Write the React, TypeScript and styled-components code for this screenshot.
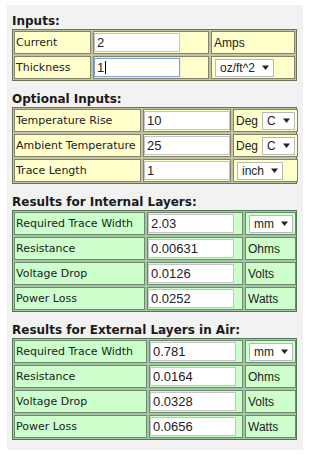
import styled, { createGlobalStyle } from 'styled-components';

type Tone = 'yellow' | 'green';

type Row = {
    label: string,
    value: string,
    unit?: string,
    select?: string,
    focused?: boolean,
}

const tones = {
    yellow: { cell: '#ffffcc', gap: '#c2c2a6', line: '#84846b', edge: '#707058' },
    green: { cell: '#ccffcc', gap: '#a8c4a8', line: '#6b8b6b', edge: '#567456' },
};

const GlobalStyle = createGlobalStyle`
    body {
        margin: 0;
        background: #ffffff;
        font-family: "DejaVu Sans", Verdana, sans-serif;
    }
`;

const sections: { title: string, tone: Tone, cols: string, rows: Row[] }[] = [
    {
        title: 'Inputs:',
        tone: 'yellow',
        cols: '77px 116px 1fr',
        rows: [
            { label: 'Current', value: '2', unit: 'Amps' },
            { label: 'Thickness', value: '1', select: 'oz/ft^2', focused: true },
        ],
    },
    {
        title: 'Optional Inputs:',
        tone: 'yellow',
        cols: '127px 88px 1fr',
        rows: [
            { label: 'Temperature Rise', value: '10', unit: 'Deg', select: 'C' },
            { label: 'Ambient Temperature', value: '25', unit: 'Deg', select: 'C' },
            { label: 'Trace Length', value: '1', select: 'inch' },
        ],
    },
    {
        title: 'Results for Internal Layers:',
        tone: 'green',
        cols: '131px 96px 1fr',
        rows: [
            { label: 'Required Trace Width', value: '2.03', select: 'mm' },
            { label: 'Resistance', value: '0.00631', unit: 'Ohms' },
            { label: 'Voltage Drop', value: '0.0126', unit: 'Volts' },
            { label: 'Power Loss', value: '0.0252', unit: 'Watts' },
        ],
    },
    {
        title: 'Results for External Layers in Air:',
        tone: 'green',
        cols: '133px 94px 1fr',
        rows: [
            { label: 'Required Trace Width', value: '0.781', select: 'mm' },
            { label: 'Resistance', value: '0.0164', unit: 'Ohms' },
            { label: 'Voltage Drop', value: '0.0328', unit: 'Volts' },
            { label: 'Power Loss', value: '0.0656', unit: 'Watts' },
        ],
    },
];

const DownArrow = () => (
    <svg width="7" height="5" viewBox="0 0 7 5">
        <path d="M0 0.5 H7 L3.5 5 Z" fill="#222" />
    </svg>
);

export default function App() {
    return (
        <>
            <GlobalStyle />
            <Panel>
                {sections.map((s) => (
                    <Section key={s.title}>
                        <Title>{s.title}</Title>
                        <Grid $tone={s.tone} $cols={s.cols}>
                            {s.rows.map((r) => (
                                <GridRow key={r.label}>
                                    <Cell $tone={s.tone}>{r.label}</Cell>
                                    <InputCell $tone={s.tone}>
                                        <Field $focused={r.focused}>
                                            {r.value}
                                            {r.focused && <Caret />}
                                        </Field>
                                    </InputCell>
                                    <UnitCell $tone={s.tone}>
                                        {r.unit && <Unit>{r.unit}</Unit>}
                                        {r.select && (
                                            <Select>
                                                {r.select}
                                                <DownArrow />
                                            </Select>
                                        )}
                                    </UnitCell>
                                </GridRow>
                            ))}
                        </Grid>
                    </Section>
                ))}
            </Panel>
        </>
    );
}

const Panel = styled.div`
    width: 285px;
    margin: 5px 0 0 7px;
    padding: 9px 6px 10px 5px;
    background: #f2f2f2;
    display: flex;
    flex-direction: column;
    gap: 11px;
`;

const Section = styled.div`
    display: flex;
    flex-direction: column;
    gap: 1px;
`;

const Title = styled.div`
    font-family: "DejaVu Sans", Verdana, sans-serif;
    font-weight: bold;
    font-size: 12px;
    line-height: 14px;
    color: #1a1a1a;
`;

const Grid = styled.div<{ $tone: Tone, $cols: string }>`
    display: grid;
    grid-template-columns: ${(p) => p.$cols};
    gap: 2px;
    padding: 1px;
    background: ${(p) => tones[p.$tone].gap};
    border: 1px solid ${(p) => tones[p.$tone].edge};
`;

const GridRow = styled.div`
    display: contents;
`;

const Cell = styled.div<{ $tone: Tone }>`
    box-sizing: border-box;
    height: 23px;
    background: ${(p) => tones[p.$tone].cell};
    border: 1px solid ${(p) => tones[p.$tone].line};
    display: flex;
    align-items: center;
    padding: 0 1px;
    font-family: "DejaVu Sans", Verdana, sans-serif;
    font-size: 11px;
    color: #222;
    white-space: nowrap;
`;

const InputCell = styled(Cell)`
    padding: 0;
`;

const UnitCell = styled(Cell)`
    gap: 3px;
    padding: 0 2px;
    font-family: "Liberation Sans", Arial, sans-serif;
    font-size: 12px;
`;

const Unit = styled.span`
    color: #222;
`;

const Field = styled.div<{ $focused?: boolean }>`
    box-sizing: border-box;
    width: 86px;
    height: 19px;
    background: #fff;
    border: 1px solid ${(p) => (p.$focused ? '#7ea3d6' : '#c4c4c4')};
    box-shadow: ${(p) => (p.$focused ? '0 0 1px #7ea3d6' : 'none')};
    display: flex;
    align-items: center;
    padding: 0 2px;
    font-family: "Liberation Sans", Arial, sans-serif;
    font-size: 13px;
    color: #222;
`;

const Caret = styled.span`
    display: inline-block;
    width: 1px;
    height: 13px;
    margin-left: 1px;
    background: #000;
`;

const Select = styled.div`
    box-sizing: border-box;
    height: 18px;
    margin-left: 1px;
    background: #fff;
    border: 1px solid #b8b8b8;
    display: flex;
    align-items: center;
    gap: 7px;
    padding: 0 4px;
    font-family: "Liberation Sans", Arial, sans-serif;
    font-size: 12px;
    color: #222;
`;
